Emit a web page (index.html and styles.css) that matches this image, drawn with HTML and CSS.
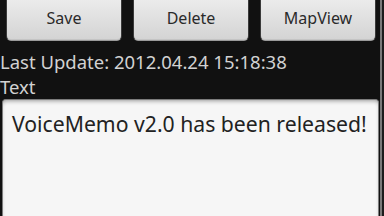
FILE: index.html
```html
<!DOCTYPE html>
<html>
<head>
<meta charset="utf-8">
<link rel="stylesheet" href="styles.css">
</head>
<body>
<div class="screen">
  <div class="main">
    <div class="buttons">
      <div class="btn">Save</div>
      <div class="btn">Delete</div>
      <div class="btn">MapView</div>
    </div>
    <div class="label">Last Update: 2012.04.24 15:18:38</div>
    <div class="label">Text</div>
    <div class="field">VoiceMemo v2.0 has been released!</div>
  </div>
  <div class="edge"></div>
</div>
</body>
</html>
```
FILE: styles.css
```css
html, body {
  margin: 0;
  padding: 0;
  background: #111111;
  overflow: hidden;
}
.screen {
  display: flex;
  width: 384px;
  height: 216px;
  font-family: "Noto Sans", "Open Sans", sans-serif;
}
.main {
  width: 380px;
  flex: none;
  display: flex;
  flex-direction: column;
}
.buttons {
  display: flex;
  gap: 11px;
  padding: 0 4px 0 6px;
  margin-top: -6px;
}
.btn {
  flex: 1;
  height: 47px;
  box-sizing: border-box;
  border-radius: 5px;
  background: linear-gradient(#eeeeee, #e2e2e2 45%, #d3d3d3);
  border: 1px solid #3a3a3a;
  border-bottom-color: #9a9a9a;
  box-shadow: inset 0 -1px 0 #c4c4c4;
  color: #2a2a2a;
  font-size: 16px;
  display: flex;
  align-items: center;
  justify-content: center;
  padding-top: 1px;
}
.label {
  color: #d2d2d2;
  font-size: 18.5px;
  line-height: 25px;
  white-space: nowrap;
}
.buttons + .label {
  margin-top: 8px;
}
.field {
  flex: 1;
  margin: 0 1px 0 2px;
  border: 1px solid #7c7c7c;
  border-bottom: none;
  border-radius: 4px 4px 0 0;
  background: #f6f6f6;
  box-shadow: inset 0 3px 4px -2px #9a9a9a;
  color: #222222;
  font-size: 21.2px;
  line-height: 28px;
  padding: 10px 0 0 9px;
  white-space: nowrap;
  overflow: hidden;
}
.edge {
  width: 2px;
  flex: none;
  border-right: 2px solid #1c1c1c;
  background: #7a7a7a;
}
```
